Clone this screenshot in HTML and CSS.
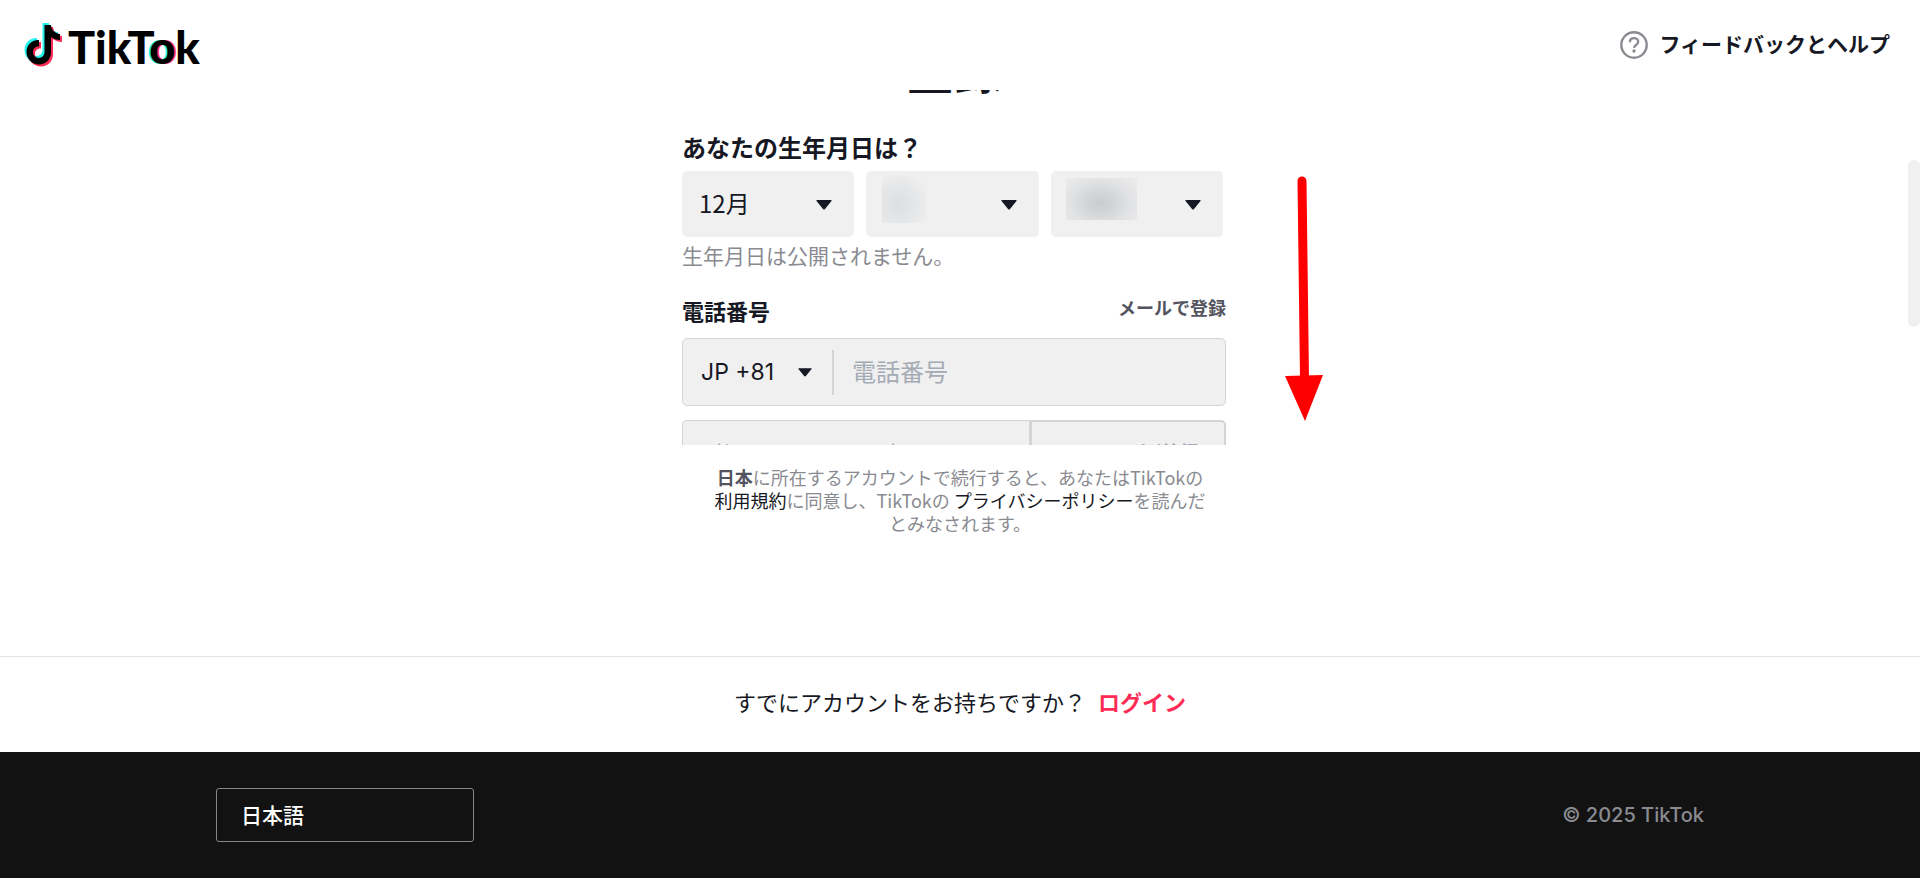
FILE: index.html
```
<!DOCTYPE html>
<html lang="ja">
<head>
<meta charset="utf-8">
<title>登録 | TikTok</title>
<link rel="stylesheet" href="styles.css">
</head>
<body>
<header class="topbar">
  <a class="logo" href="#" aria-label="TikTok">
    <svg class="logo-note" viewBox="0 0 38 44" aria-hidden="true">
      <defs>
        <path id="note" d="M20.500 2H27c.5 5 4 8.500 9 9v6c-3.500 0-6.500-1.200-9-3V29c0 7.200-5 12.500-12 12.500S2.500 36 2.500 29 8 16.500 15 17v6.600c-3.500-.4-6 2-6 5.400s2.500 5.900 5.800 5.900 5.700-2.500 5.700-5.900z"/>
      </defs>
      <use href="#note" x="-2" y="-2" fill="#25f4ee"/>
      <use href="#note" x="2" y="2" fill="#fe2c55"/>
      <use href="#note" fill="#000"/>
    </svg>
    <span class="wordmark">TikT<span class="wordmark-o">o</span>k</span>
  </a>
  <a class="help" href="#">
    <svg class="help-icon" viewBox="0 0 28 28" aria-hidden="true">
      <circle cx="14" cy="14" r="12.700" fill="none" stroke="#8a8b91" stroke-width="2.400"/>
      <path d="M9.800 11.200C9.900 8.700 11.600 7.200 14 7.200s4.200 1.500 4.200 3.600c0 3-3.800 3-4.100 6" fill="none" stroke="#8a8b91" stroke-width="2.300"/>
      <circle cx="14" cy="20" r="1.700" fill="#8a8b91"/>
    </svg>
    <span class="help-text">フィードバックとヘルプ</span>
  </a>
</header>

<main class="scroll-area">
  <form class="signup">
    <h1 class="title">登録</h1>
    <h2 class="birth-heading">あなたの生年月日は？</h2>
    <div class="birth-row">
      <div class="picker">
        <select aria-label="月"><option>12月</option></select>
        <svg class="caret" viewBox="0 0 16 10" aria-hidden="true"><path d="M1 0h14q1 0 .5 1L9 9q-1 1-2 0L.5 1Q0 0 1 0z"/></svg>
      </div>
      <div class="picker">
        <select aria-label="日"><option></option></select>
        <span class="mask mask-day"></span>
        <svg class="caret" viewBox="0 0 16 10" aria-hidden="true"><path d="M1 0h14q1 0 .5 1L9 9q-1 1-2 0L.5 1Q0 0 1 0z"/></svg>
      </div>
      <div class="picker">
        <select aria-label="年"><option></option></select>
        <span class="mask mask-year"></span>
        <svg class="caret" viewBox="0 0 16 10" aria-hidden="true"><path d="M1 0h14q1 0 .5 1L9 9q-1 1-2 0L.5 1Q0 0 1 0z"/></svg>
      </div>
    </div>
    <p class="hint">生年月日は公開されません。</p>
    <div class="phone-heading">
      <label for="phone">電話番号</label>
      <a href="#">メールで登録</a>
    </div>
    <div class="phone-box">
      <button class="country" type="button">JP +81
        <svg class="country-caret" viewBox="0 0 16 10" aria-hidden="true"><path d="M1 0h14q1 0 .5 1L9 9q-1 1-2 0L.5 1Q0 0 1 0z"/></svg>
      </button>
      <input id="phone" type="tel" placeholder="電話番号">
    </div>
    <div class="code-box">
      <input type="text" aria-label="認証コード" placeholder="6桁のコードを入力">
      <button type="button" disabled>コードを送信</button>
    </div>
    <svg class="arrow" viewBox="0 0 40 243" aria-hidden="true">
      <path d="M17 3L19.500 200" stroke="#f00" stroke-width="9" stroke-linecap="round"/>
      <path d="M0 198L38 197L20 243z" fill="#f00"/>
    </svg>
  </form>
  <span class="scroll-thumb"></span>
</main>

<p class="legal"><strong>日本</strong>に所在するアカウントで続行すると、あなたはTikTokの<br><a href="#">利用規約</a>に同意し、TikTokの <a href="#">プライバシーポリシー</a>を読んだ<br>とみなされます。</p>

<div class="login-bar">すでにアカウントをお持ちですか？<a href="#">ログイン</a></div>

<footer class="footer">
  <select class="language" aria-label="言語"><option>日本語</option></select>
  <span class="copyright">© 2025 TikTok</span>
</footer>
</body>
</html>
```
FILE: styles.css
```
* { box-sizing: border-box; }

body {
  margin: 0;
  height: 100vh;
  display: flex;
  flex-direction: column;
  background: #fff;
  color: #161823;
  font-family: "Noto Sans CJK JP", sans-serif;
  font-size: 22px;
}

a { color: inherit; text-decoration: none; }
h1, h2, p { margin: 0; }
select, input, button { font: inherit; color: inherit; border: 0; margin: 0; border-radius: 0; }
select { appearance: none; }

.topbar {
  flex: none;
  height: 90px;
  padding: 0 30px 0 24px;
  display: flex;
  align-items: center;
  justify-content: space-between;
}
.logo { display: flex; align-items: center; gap: 6px; color: #000; }
.logo-note { width: 38px; height: 44px; overflow: visible; }
.wordmark {
  font: 900 45px/44px Lato, sans-serif;
  padding-top: 4px;
}
.wordmark-o { text-shadow: -2px 0 #25f4ee, 2px 0 #fe2c55; }
.help {
  display: flex;
  align-items: center;
  gap: 11px;
  font-size: 21px;
  font-weight: 700;
  line-height: 30px;
}
.help-icon { width: 28px; height: 28px; }
.help-text { padding-bottom: 4px; }

.scroll-area {
  position: relative;
  flex: 1;
  min-height: 0;
  overflow: hidden;
  padding-right: 12px;
}
.scroll-thumb {
  position: absolute;
  top: 70px;
  right: 0;
  width: 12px;
  height: 167px;
  border-radius: 6px;
  background: #f0f0f0;
}
.signup {
  position: relative;
  max-width: 544px;
  margin: -52px auto 0;
}
.title {
  font-size: 48px;
  line-height: 60px;
  text-align: center;
}
.birth-heading {
  margin-top: 31px;
  font-size: 24px;
  line-height: 36px;
}
.birth-row {
  display: flex;
  gap: 12px;
  margin-top: 6px;
  padding-right: 3px;
}
.picker { position: relative; flex: 1; min-width: 0; }
.picker select {
  display: block;
  width: 100%;
  height: 66px;
  padding: 0 17px 4px;
  border-radius: 5px;
  background: #f0f0f0;
  font-size: 24px;
}
.caret {
  position: absolute;
  top: 29px;
  right: 22px;
  width: 16px;
  height: 10px;
  fill: #161823;
}
.mask { position: absolute; }
.mask-day {
  top: 4px;
  left: 16px;
  width: 44px;
  height: 48px;
  background: radial-gradient(circle at 16px 29px, #dcdee0, #e6e7e8 20px, #efefef 32px);
}
.mask-year {
  top: 7px;
  left: 15px;
  width: 71px;
  height: 42px;
  background: radial-gradient(ellipse 46px 34px at 34px 25px, #cbcccd, #d5d6d7 35%, #e1e2e4 65%, #ebebeb);
}
.hint {
  margin-top: 3px;
  font-size: 21px;
  line-height: 30px;
  color: #8a8b91;
}
.phone-heading {
  display: flex;
  align-items: flex-start;
  justify-content: space-between;
  margin-top: 22px;
  height: 46px;
  font-weight: 700;
}
.phone-heading label { line-height: 36px; }
.phone-heading a { font-size: 18px; line-height: 30px; color: #545460; }

.phone-box {
  display: flex;
  align-items: center;
  height: 68px;
  border: 1px solid #d3d4d5;
  border-radius: 5px;
  background: #f0f0f0;
}
.country {
  display: flex;
  align-items: center;
  gap: 24px;
  width: 151px;
  height: 45px;
  padding: 0 0 0 18px;
  border-right: 2px solid #d3d4d5;
  background: none;
  font-family: Inter, sans-serif;
  font-size: 23px;
}
.country-caret { width: 14px; height: 9px; fill: #161823; }
.phone-box input {
  flex: 1;
  min-width: 0;
  padding: 0 18px 4px;
  background: none;
  font-size: 24px;
}
input::placeholder { color: #a5abb5; opacity: 1; }

.code-box {
  display: flex;
  height: 68px;
  margin-top: 14px;
}
.code-box input {
  flex: 1;
  min-width: 0;
  padding: 0 18px 2px;
  border: 1px solid #d3d4d5;
  border-right: 0;
  border-radius: 5px 0 0 5px;
  background: #f0f0f0;
  font-size: 24px;
}
.code-box button {
  width: 197px;
  padding: 0 0 4px 12px;
  border: 2px solid #d3d4d5;
  border-left-width: 3px;
  border-radius: 0 5px 5px 0;
  background: #f0f0f0;
  color: #a5abb5;
  font-weight: 700;
}
.arrow {
  position: absolute;
  top: 140px;
  left: 603px;
  width: 40px;
  height: 243px;
  overflow: visible;
}

.legal {
  flex: none;
  padding: 21px 0 121px;
  font-size: 18px;
  line-height: 23px;
  text-align: center;
  color: #8a8b91;
}
.legal strong { color: #545460; }
.legal a { color: #161823; }

.login-bar {
  flex: none;
  display: flex;
  align-items: center;
  justify-content: center;
  gap: 12px;
  height: 96px;
  padding-bottom: 8px;
  border-top: 1px solid #e3e3e4;
}
.login-bar a { color: #fe2c55; font-weight: 700; }

.footer {
  flex: none;
  display: flex;
  align-items: center;
  justify-content: space-between;
  height: 126px;
  padding: 0 216px;
  background: #121212;
}
.language {
  width: 258px;
  height: 54px;
  padding: 0 24px 2px;
  border: 1px solid #86878b;
  border-radius: 3px;
  background: transparent;
  color: #fff;
  font-size: 21px;
  font-weight: 500;
}
.copyright {
  font-family: Inter, sans-serif;
  font-size: 20px;
  font-weight: 500;
  color: #8a8b91;
}
```
